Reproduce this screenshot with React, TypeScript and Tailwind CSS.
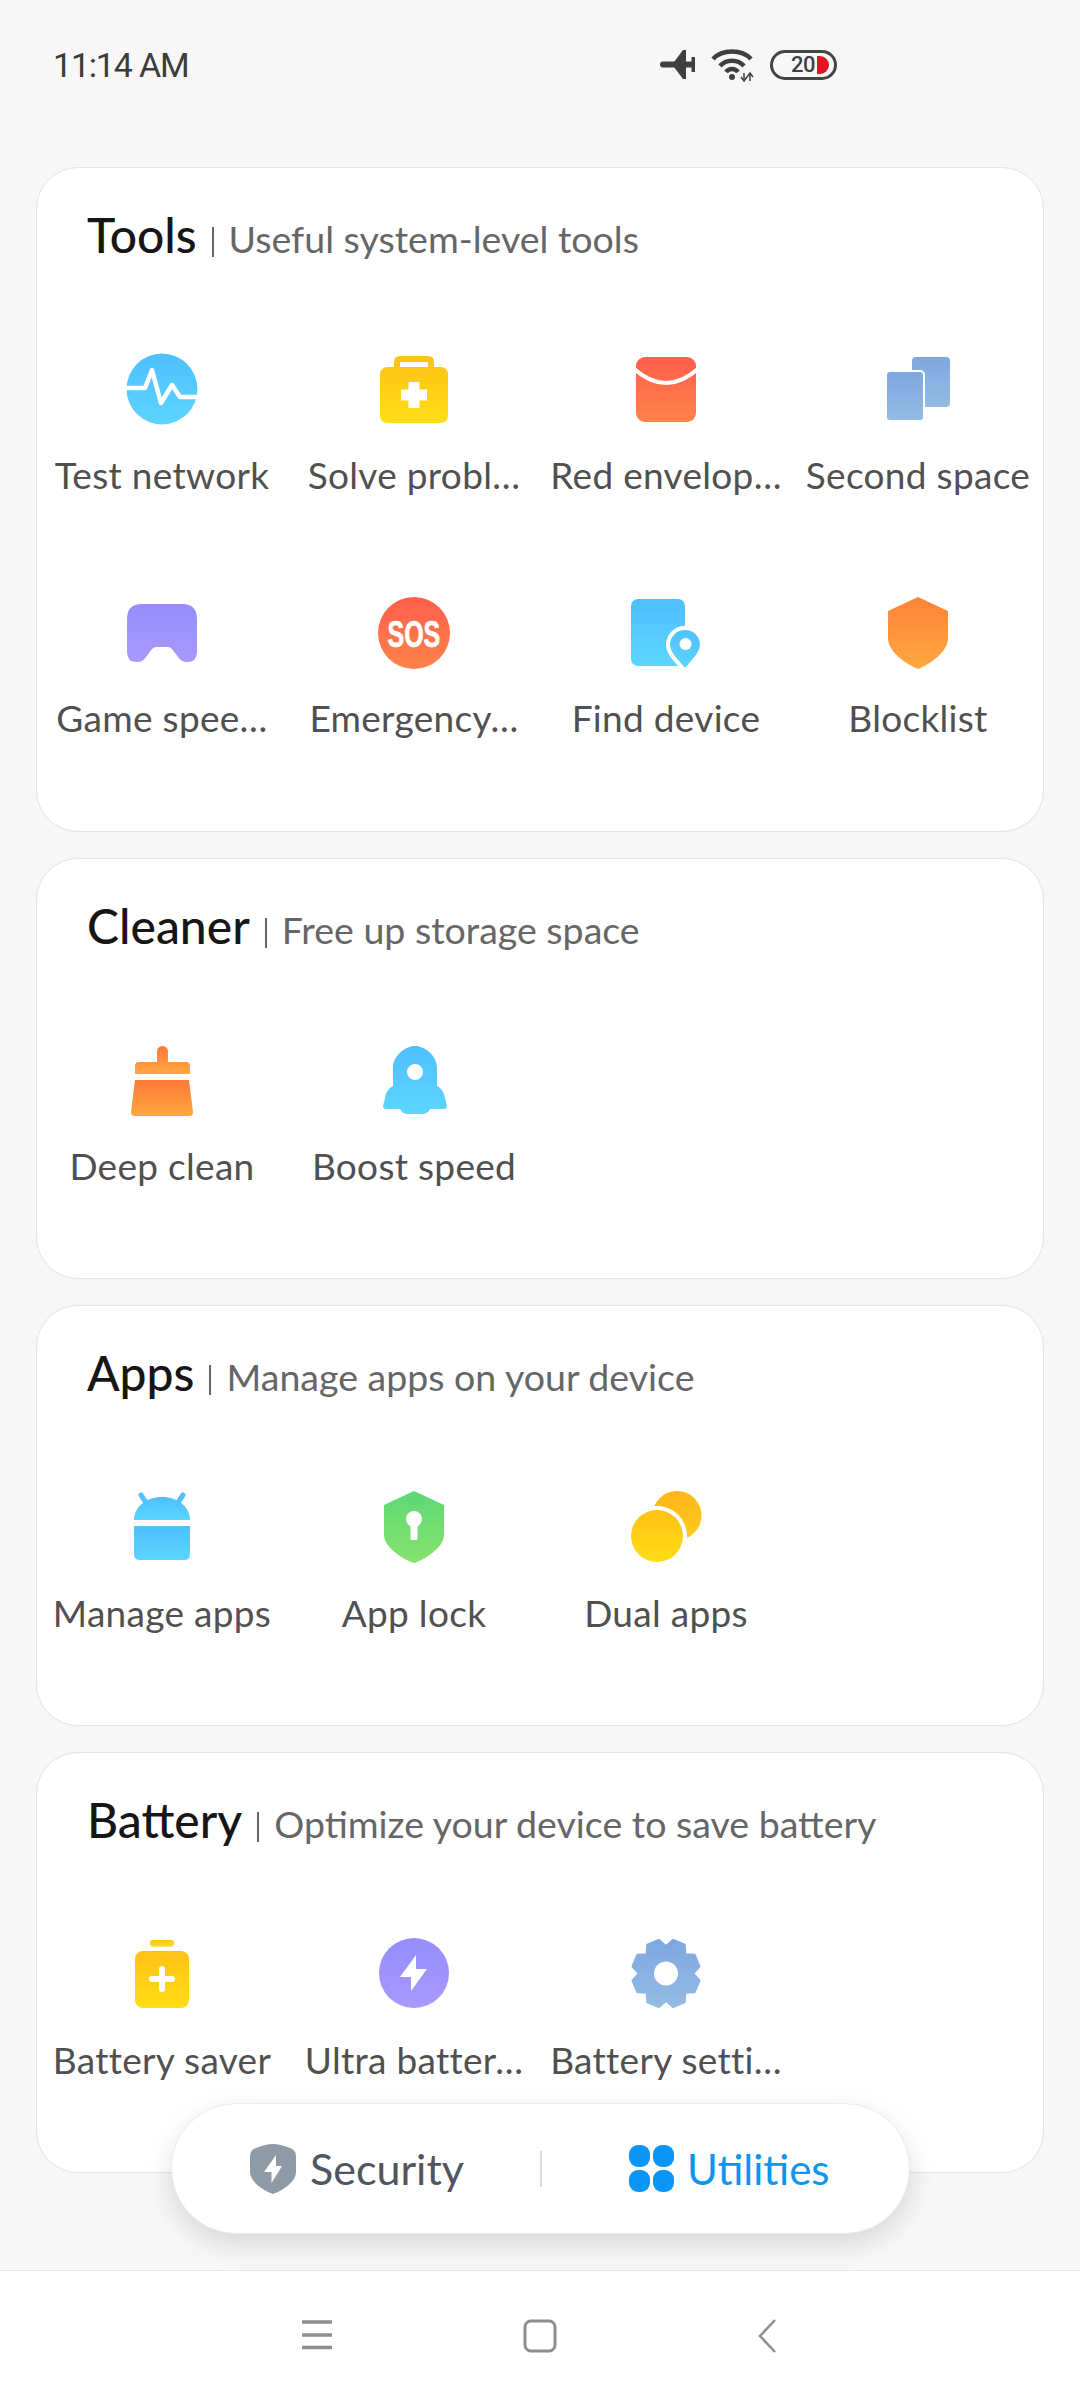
import React from 'react';

const FONT = "font-['Lato','Open_Sans',sans-serif]";

function Grad({ id, from, to }: { id: string; from: string; to: string }) {
  return (
    <defs>
      <linearGradient id={id} x1="0" y1="0" x2="0" y2="1">
        <stop offset="0" stopColor={from} />
        <stop offset="1" stopColor={to} />
      </linearGradient>
    </defs>
  );
}

const BLUE = ['#4fbfff', '#5cd5ff'];
const YELLOW = ['#ffc116', '#ffde14'];
const RED = ['#ff5e4c', '#ff8349'];
const PERI = ['#7ea7e2', '#94bbe3'];
const PURPLE = ['#958dfd', '#a999fd'];
const ORANGE = ['#ff8239', '#ffa83f'];
const GREEN = ['#5dd874', '#88e36e'];

function Icon({ id, colors, children }: { id: string; colors: string[]; children: React.ReactNode }) {
  return (
    <svg viewBox="0 0 84 84" className="w-[84px] h-[84px] block">
      <Grad id={id} from={colors[0]} to={colors[1]} />
      <g fill={`url(#${id})`}>{children}</g>
    </svg>
  );
}

const TestNetwork = () => (
  <Icon id="g1" colors={BLUE}>
    <circle cx="42" cy="42" r="35.5" />
    <path d="M5 41H25L32 23L41 56L52 38L60 50H79" fill="none" stroke="#fff" strokeWidth="4.5" strokeLinejoin="round" />
  </Icon>
);

const SolveProblems = () => (
  <Icon id="g2" colors={YELLOW}>
    <path fillRule="evenodd" d="M22 20V15Q22 9 28 9H56Q62 9 62 15V20H68Q76 20 76 28V68Q76 76 68 76H16Q8 76 8 68V28Q8 20 16 20ZM28 15V20H56V15Z" />
    <path d="M36.5 35H47.5V42.5H55V53.5H47.5V61H36.5V53.5H29V42.5H36.5Z" fill="#fff" />
  </Icon>
);

const RedEnvelope = () => (
  <Icon id="g3" colors={RED}>
    <rect x="12" y="10" width="60" height="65" rx="9" />
    <path d="M9 21Q42 51 75 21" fill="none" stroke="#fff" strokeWidth="4" />
  </Icon>
);

const SecondSpace = () => (
  <Icon id="g4" colors={PERI}>
    <rect x="36" y="10" width="38" height="50" rx="4" />
    <rect x="10" y="24" width="38" height="50" rx="4" stroke="#fff" strokeWidth="2" />
  </Icon>
);

const GameSpeed = () => (
  <Icon id="g5" colors={PURPLE}>
    <path d="M22 14H62Q77 14 77 29V62Q77 72 67 72Q61 72 58 67L52 59Q50 57 48 57H36Q34 57 32 59L26 67Q23 72 17 72Q7 72 7 62V29Q7 14 22 14Z" />
  </Icon>
);

const Sos = () => (
  <Icon id="g6" colors={RED}>
    <circle cx="42" cy="43" r="36" />
    <text transform="translate(15.5 57) scale(1 1.48)" fontSize="25" fontWeight="700" fill="#fff" stroke="#fff" strokeWidth="0.5" fontFamily="Liberation Sans, sans-serif">
      SOS
    </text>
  </Icon>
);

const FindDevice = () => (
  <Icon id="g7" colors={BLUE}>
    <rect x="7" y="9" width="54" height="67" rx="7" />
    <path d="M61 38C70 38 78 45 78 55C78 64 68 72 61 81C54 72 44 64 44 55C44 45 52 38 61 38Z" stroke="#fff" strokeWidth="4" />
    <circle cx="61.5" cy="54" r="6" fill="#fff" />
  </Icon>
);

const Blocklist = () => (
  <Icon id="g8" colors={ORANGE}>
    <path d="M42 7L72 21V48C72 62 54 74 42 79C30 74 12 62 12 48V21Z" />
  </Icon>
);

const DeepClean = () => (
  <Icon id="g9" colors={['#ff7838', '#ffa83f']}>
    <path d="M37 13.5a5.5 5.5 0 0 1 11 0V24H66Q70 24 70 28V36H15V28Q15 24 19 24H37Z" />
    <path d="M15 42H69L73 74Q73 78 69 78H15Q11 78 11 74Z" />
  </Icon>
);

const BoostSpeed = () => (
  <Icon id="g10" colors={BLUE}>
    <path fillRule="evenodd" d="M43 8C51 8 65 16 65 30V48C69 50 72 54 73 60L75 68Q75 71 72 71H58Q56 76 50 76H36Q30 76 28 71H14Q11 71 11 68L13 60C14 54 17 50 21 48V30C21 16 35 8 43 8ZM43 26a8 8 0 1 0 0 16a8 8 0 1 0 0 -16Z" />
  </Icon>
);

const ManageApps = () => (
  <Icon id="g11" colors={BLUE}>
    <path d="M14 35C14 22 26 12 42 12C58 12 70 22 70 35Z" />
    <path d="M21 10L27 19M63 10L57 19" fill="none" stroke="#52c2ff" strokeWidth="5" strokeLinecap="round" />
    <path d="M14 41H70V69Q70 75 64 75H20Q14 75 14 69Z" />
  </Icon>
);

const AppLock = () => (
  <Icon id="g12" colors={GREEN}>
    <path d="M42 6L72 20V50C72 62 54 74 42 78C30 74 12 62 12 50V20Z" />
    <circle cx="42" cy="34" r="8" fill="#fff" />
    <rect x="38.5" y="36" width="7" height="19" rx="1.5" fill="#fff" />
  </Icon>
);

const DualApps = () => (
  <svg viewBox="0 0 84 84" className="w-[84px] h-[84px] block">
    <Grad id="g13a" from="#ffb61c" to="#ffcb1c" />
    <Grad id="g13b" from="#ffc116" to="#ffdc14" />
    <circle cx="53" cy="30.5" r="24.5" fill="url(#g13a)" />
    <circle cx="33" cy="51" r="30" fill="#fff" />
    <circle cx="33" cy="51" r="26" fill="url(#g13b)" />
  </svg>
);

const BatterySaver = () => (
  <Icon id="g14" colors={YELLOW}>
    <rect x="30" y="8" width="24" height="6.5" rx="3" />
    <rect x="15" y="19" width="54" height="57" rx="8" />
    <path d="M32 47H52M42 37V57" stroke="#fff" strokeWidth="6" strokeLinecap="round" />
  </Icon>
);

const UltraBattery = () => (
  <Icon id="g15" colors={PURPLE}>
    <circle cx="42" cy="41" r="35" />
    <path d="M44 23L28 45H39V59L55 37H44Z" fill="#fff" />
  </Icon>
);

// 8 lobes, notches on the axes and diagonals
function gearPath(cx: number, cy: number) {
  const pt = (deg: number, r: number) => {
    const a = ((deg - 90) * Math.PI) / 180;
    return `${(cx + r * Math.cos(a)).toFixed(1)} ${(cy + r * Math.sin(a)).toFixed(1)}`;
  };
  let d = '';
  for (let k = 0; k < 8; k++) {
    const base = k * 45;
    d += `${k === 0 ? 'M' : 'L'}${pt(base, 27)}L${pt(base + 12, 34)}L${pt(base + 33, 34)}`;
  }
  return d + 'Z';
}

const BatterySettings = () => (
  <Icon id="g16" colors={PERI}>
    <path d={gearPath(42, 41.5)} stroke="url(#g16)" strokeWidth="2.5" strokeLinejoin="round" />
    <circle cx="42" cy="41.5" r="12" fill="#fff" />
  </Icon>
);

type Tool = { label: string; icon: React.ReactNode };

const sections: { title: string; sub: string; height: string; tools: Tool[] }[] = [
  {
    title: 'Tools',
    sub: 'Useful system-level tools',
    height: 'h-[665px]',
    tools: [
      { label: 'Test network', icon: <TestNetwork /> },
      { label: 'Solve probl…', icon: <SolveProblems /> },
      { label: 'Red envelop…', icon: <RedEnvelope /> },
      { label: 'Second space', icon: <SecondSpace /> },
      { label: 'Game spee…', icon: <GameSpeed /> },
      { label: 'Emergency…', icon: <Sos /> },
      { label: 'Find device', icon: <FindDevice /> },
      { label: 'Blocklist', icon: <Blocklist /> },
    ],
  },
  {
    title: 'Cleaner',
    sub: 'Free up storage space',
    height: 'h-[421px]',
    tools: [
      { label: 'Deep clean', icon: <DeepClean /> },
      { label: 'Boost speed', icon: <BoostSpeed /> },
    ],
  },
  {
    title: 'Apps',
    sub: 'Manage apps on your device',
    height: 'h-[421px]',
    tools: [
      { label: 'Manage apps', icon: <ManageApps /> },
      { label: 'App lock', icon: <AppLock /> },
      { label: 'Dual apps', icon: <DualApps /> },
    ],
  },
  {
    title: 'Battery',
    sub: 'Optimize your device to save battery',
    height: 'h-[421px]',
    tools: [
      { label: 'Battery saver', icon: <BatterySaver /> },
      { label: 'Ultra batter…', icon: <UltraBattery /> },
      { label: 'Battery setti…', icon: <BatterySettings /> },
    ],
  },
];

function StatusBar() {
  return (
    <div className="h-[167px] pl-[53px] pt-[45px] flex items-start">
      <div className="w-[607px] h-[40px] flex items-center font-['Roboto',sans-serif] text-[34px] tracking-[-1.2px] text-[#3c3c3c] whitespace-nowrap">
        11:14 AM
      </div>
      <div className="flex items-center h-[40px] gap-[15px]">
        <svg viewBox="0 0 36 32" className="w-[36px] h-[32px]" fill="#3f3f3f">
          <path d="M3 12.5H33V18.5H3a3 3 0 0 1 0 -6Z" />
          <path d="M14 13L23 1H26V30H23L14 18Z" />
          <rect x="31.5" y="8" width="3.5" height="15" />
        </svg>
        <svg viewBox="0 0 44 34" className="w-[44px] h-[34px]" fill="none" stroke="#3f3f3f" strokeWidth="4.5">
          <path d="M2 11C11 1 31 1 40 11" />
          <path d="M9 18C15 11 27 11 33 18" />
          <path d="M15 24C18 20 24 20 27 24" />
          <circle cx="21" cy="29" r="3" fill="#3f3f3f" stroke="none" />
          <path d="M33 25V33M39 25V33" strokeWidth="1.5" />
          <path d="M30 29L33 33L36 29M36 29L39 25L42 29" strokeWidth="1.5" />
        </svg>
        <div className="w-[67px] h-[30px] rounded-full border-[3px] border-[#444] flex items-center justify-end pr-[5px] gap-[2px] font-['Roboto',sans-serif]">
          <span className="text-[22px] font-medium leading-none text-[#3f3f3f] tracking-[-0.5px]">20</span>
          <span className="w-[12px] h-[18px] bg-[#e0171f] rounded-r-full" />
        </div>
      </div>
    </div>
  );
}

function BottomPill() {
  return (
    <div className="absolute left-[171px] top-[2103px] w-[739px] h-[131px] bg-white rounded-full border border-[#ececec] shadow-[0_10px_28px_rgba(0,0,0,0.13)] flex items-center">
      <div className="w-[368px] flex items-center pl-[78px] gap-[14px]">
        <svg viewBox="0 0 46 50" className="w-[46px] h-[50px]">
          <path d="M23 0Q30 0 40 4Q46 6 46 12V28C46 38 32 47 23 50C14 47 0 38 0 28V12Q0 6 6 4Q16 0 23 0Z" fill="#8e9aa6" />
          <path d="M26 11L14 28H21.5V39L32 22H26Z" fill="#fff" />
        </svg>
        <span className="text-[43px] text-[#50565d] leading-none">Security</span>
      </div>
      <div className="w-[2px] h-[36px] bg-[#dcdcdc]" />
      <div className="flex items-center pl-[87px] gap-[13px]">
        <div className="grid grid-cols-2 gap-[3px] w-[45px]">
          <div className="h-[22px] rounded-[9px] bg-[#0a95f7]" />
          <div className="h-[22px] rounded-[9px] bg-[#0a95f7]" />
          <div className="h-[22px] rounded-[9px] bg-[#0a95f7]" />
          <div className="h-[22px] rounded-[9px] bg-[#0a95f7]" />
        </div>
        <span className="text-[42px] text-[#0d95ee] leading-none">Utilities</span>
      </div>
    </div>
  );
}

function NavBar() {
  return (
    <div className="h-[130px] bg-white border-t border-[#e6e6e6] flex items-start pl-[302px] pt-[48px]">
      <svg viewBox="0 0 30 32" className="w-[30px] h-[32px]" stroke="#8f8f8f" strokeWidth="3.5">
        <path d="M0 3H30M0 16H30M0 28.5H30" />
      </svg>
      <svg viewBox="0 0 34 34" className="ml-[191px] w-[34px] h-[34px]" fill="none" stroke="#8f8f8f" strokeWidth="3">
        <rect x="2" y="2" width="30" height="30" rx="6" />
      </svg>
      <svg viewBox="0 0 18 34" className="ml-[201px] w-[18px] h-[34px]" fill="none" stroke="#8f8f8f" strokeWidth="2.5">
        <path d="M17 1L2 17L17 33" />
      </svg>
    </div>
  );
}

export default function App() {
  return (
    <div className={`relative w-[1080px] h-[2400px] bg-[#f7f7f7] flex flex-col overflow-hidden ${FONT}`}>
      <StatusBar />
      <main className="flex-1 px-[36px] flex flex-col gap-[26px]">
        {sections.map((s) => (
          <section key={s.title} className={`${s.height} bg-white rounded-[42px] border border-[#e4e4e4] overflow-hidden`}>
            <div className="h-[179px] pl-[50px] pt-[39px]">
              <div className="flex items-baseline">
                <h2 className="text-[48px] leading-[56px] font-medium text-[#161616]">{s.title}</h2>
                <span className="inline-block w-[2px] h-[30px] bg-[#666] ml-[15px] mr-[15px] translate-y-[4px]" />
                <span className="text-[37.5px] text-[#666]">{s.sub}</span>
              </div>
            </div>
            <div className="grid grid-cols-4 -mx-px">
              {s.tools.map((t) => (
                <div key={t.label} className="h-[243px] flex flex-col items-center">
                  {t.icon}
                  <div className="mt-[19px] h-[50px] flex items-center text-[37px] tracking-[0.3px] text-[#505050] whitespace-nowrap">{t.label}</div>
                </div>
              ))}
            </div>
          </section>
        ))}
      </main>
      <NavBar />
      <BottomPill />
    </div>
  );
}
